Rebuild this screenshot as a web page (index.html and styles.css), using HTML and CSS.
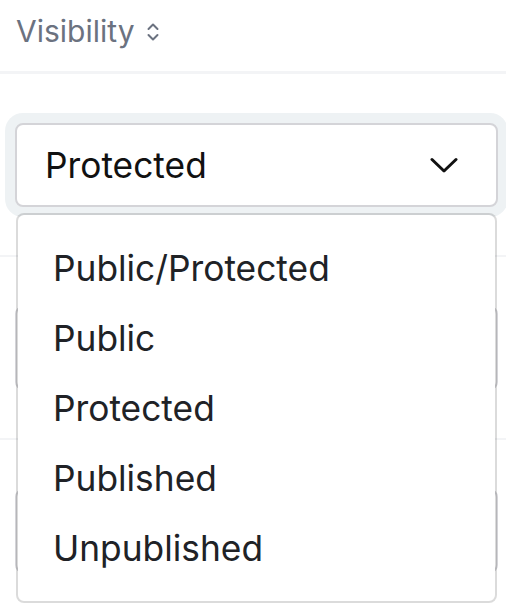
FILE: index.html
```html
<!DOCTYPE html>
<html lang="en">
<head>
<meta charset="utf-8">
<title>Visibility</title>
<link rel="stylesheet" href="styles.css">
</head>
<body>
<div class="table">
  <div class="head">
    <span class="head-label">Visibility</span>
    <svg class="sort-icon" viewBox="0 0 14 22" width="14" height="22" aria-hidden="true">
      <polyline points="2.5,8 7,3.5 11.5,8" />
      <polyline points="2.5,14 7,18.5 11.5,14" />
    </svg>
  </div>
  <div class="row">
    <div class="select-wrap">
      <div class="select is-open">
        <span class="select-value">Protected</span>
        <svg class="chevron" viewBox="0 0 28 17" width="28" height="17" aria-hidden="true">
          <polyline points="2,2.5 14,14 26,2.5" />
        </svg>
      </div>
      <ul class="menu">
        <li class="option">Public/Protected</li>
        <li class="option">Public</li>
        <li class="option">Protected</li>
        <li class="option">Published</li>
        <li class="option">Unpublished</li>
      </ul>
    </div>
  </div>
  <div class="row">
    <div class="select-wrap">
      <div class="select"></div>
    </div>
  </div>
  <div class="row">
    <div class="select-wrap">
      <div class="select"></div>
    </div>
  </div>
</div>
</body>
</html>
```

FILE: styles.css
```css
html, body {
  margin: 0;
  padding: 0;
  background: #ffffff;
}

body {
  font-family: Inter, "Noto Sans", "Liberation Sans", sans-serif;
  width: 506px;
  overflow: hidden;
}

.table {
  display: flex;
  flex-direction: column;
}

.head {
  height: 74px;
  box-sizing: border-box;
  padding: 13px 0 0 16px;
  display: flex;
  align-items: flex-start;
  gap: 11px;
  border-bottom: 3px solid #f3f4f6;
}

.head-label {
  font-size: 30px;
  color: #6b7280;
  line-height: 36px;
}

.sort-icon {
  margin-top: 8px;
  fill: none;
  stroke: #6b7280;
  stroke-width: 2;
  stroke-linecap: round;
  stroke-linejoin: round;
}

.row {
  padding: 49px 8px 48px 15px;
  border-bottom: 2px solid #f3f4f6;
}

.select-wrap {
  position: relative;
}

.select {
  height: 84px;
  box-sizing: border-box;
  border: 2px solid #d4d4d8;
  border-radius: 8px;
  background: #ffffff;
  display: flex;
  align-items: center;
  justify-content: space-between;
  padding: 0 38px 0 28px;
}

.select.is-open {
  box-shadow: 0 0 0 10px #eef2f4;
}

.select-value {
  font-size: 35.3px;
  color: #111111;
}

.chevron {
  fill: none;
  stroke: #111111;
  stroke-width: 3;
  stroke-linecap: round;
  stroke-linejoin: round;
}

.menu {
  position: absolute;
  z-index: 5;
  top: 90px;
  left: 1px;
  right: 1px;
  margin: 0;
  padding: 19px 0 17px 35px;
  list-style: none;
  background: #ffffff;
  background-clip: padding-box;
  border: 2px solid rgba(0, 0, 0, 0.14);
  border-radius: 8px;
}

.option {
  font-size: 35.3px;
  line-height: 70px;
  color: #202226;
}
```
